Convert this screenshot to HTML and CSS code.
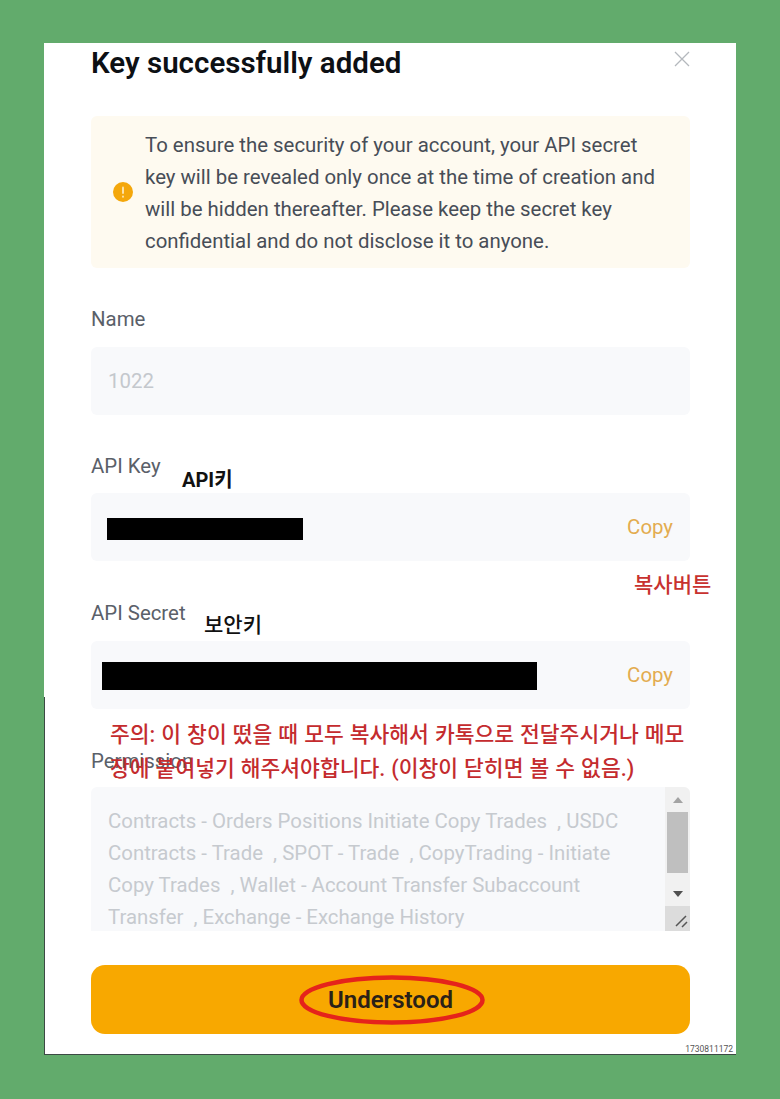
FILE: index.html
```html
<!DOCTYPE html>
<html lang="ko">
<head>
<meta charset="utf-8">
<title>Key successfully added</title>
<link rel="stylesheet" href="styles.css">
</head>
<body>
<main class="card">
  <header class="head">
    <h1 class="title">Key successfully added</h1>
    <svg class="close" viewBox="0 0 16 16" width="16" height="16"><path d="M1 1 15 15M15 1 1 15"/></svg>
  </header>
  <section class="notice">
    <svg class="warn" viewBox="0 0 20 20" width="20" height="20"><circle cx="10" cy="10" r="10"/><rect x="9" y="4.5" width="2" height="7.5" rx="1"/><rect x="9" y="13.5" width="2" height="2.2" rx="1"/></svg>
    <p class="notice-text">To ensure the security of your account, your API secret key will be revealed only once at the time of creation and will be hidden thereafter. Please keep the secret key confidential and do not disclose it to anyone.</p>
  </section>
  <section class="field name-field">
    <label class="label">Name</label>
    <div class="input"><span class="placeholder">1022</span></div>
  </section>
  <section class="field key-field">
    <label class="label">API Key</label>
    <div class="input input-copy"><span class="copy">Copy</span></div>
  </section>
  <section class="field secret-field">
    <label class="label label-secret">API Secret</label>
    <div class="input input-copy"><span class="copy">Copy</span></div>
  </section>
  <section class="field perm-field">
    <label class="label label-perm">Permission</label>
    <div class="textarea">
      <p class="perm-text">Contracts - Orders Positions Initiate Copy Trades &nbsp;, USDC Contracts - Trade &nbsp;, SPOT - Trade &nbsp;, CopyTrading - Initiate Copy Trades &nbsp;, Wallet - Account Transfer Subaccount Transfer &nbsp;, Exchange - Exchange History</p>
      <div class="scrollbar">
        <div class="arrow-btn"><i class="tri tri-up"></i></div>
        <div class="track"><div class="thumb"></div></div>
        <div class="arrow-btn"><i class="tri tri-down"></i></div>
        <div class="resizer"><svg viewBox="0 0 24 24" width="24" height="24"><path d="M11 20 21 10M17 21 22 16"/></svg></div>
      </div>
    </div>
  </section>
  <button class="submit" type="button">Understood</button>

  <div class="edge"></div>
  <div class="redact redact-key"></div>
  <div class="redact redact-secret"></div>
  <span class="note note-api">API키</span>
  <span class="note note-secret">보안키</span>
  <span class="note note-copy">복사버튼</span>
  <p class="note note-warning">주의: 이 창이 떴을 때 모두 복사해서 카톡으로 전달주시거나 메모<br>장에 붙여넣기 해주셔야합니다. (이창이 닫히면 볼 수 없음.)</p>
  <svg class="ring" viewBox="0 0 186 50" width="186" height="50"><ellipse cx="93" cy="25" rx="90.5" ry="22.5"/></svg>
  <span class="stamp">1730811172</span>
</main>
</body>
</html>
```
FILE: styles.css
```css
* { box-sizing: border-box; }
html, body { margin: 0; padding: 0; }
body {
  width: 780px;
  height: 1099px;
  overflow: hidden;
  background: #62ab6c;
  padding: 43px 44px 44px;
  font-family: "Roboto", "Noto Sans CJK KR", sans-serif;
}
.card {
  position: relative;
  width: 692px;
  height: 1012px;
  background: #fff;
  padding: 0 46px 0 47px;
  border-bottom: 1px solid #3c4a44;
  display: flex;
  flex-direction: column;
}
.head {
  display: flex;
  justify-content: space-between;
  align-items: flex-start;
  height: 73px;
}
.title {
  margin: 2px 0 0;
  font-size: 29.5px;
  line-height: 36px;
  font-weight: 600;
  color: #0d1014;
}
.close { margin: 8px 0 0; }
.close path { stroke: #b4b8bd; stroke-width: 1.3; fill: none; }
.notice {
  display: flex;
  align-items: center;
  gap: 12px;
  height: 152px;
  padding: 0 20px 0 22px;
  background: #fefaf0;
  border-radius: 6px;
}
.warn { flex: none; }
.warn circle { fill: #f4a70b; }
.warn rect { fill: #fde2a6; }
.notice-text {
  margin: 0;
  padding-top: 2px;
  font-size: 20.4px;
  line-height: 32px;
  color: #474d57;
}
.field { display: flex; flex-direction: column; }
.name-field { margin-top: 37px; }
.key-field { margin-top: 37px; }
.secret-field { margin-top: 38px; }
.perm-field { margin-top: 38px; }
.label {
  font-size: 20.4px;
  line-height: 28px;
  height: 28px;
  color: #5a6069;
  margin-bottom: 14px;
}
.key-field .label { margin-bottom: 13px; }
.label-perm { margin-bottom: 12px; }
.input {
  display: flex;
  align-items: center;
  justify-content: space-between;
  height: 68px;
  padding: 0 17px;
  background: #f8f9fb;
  border-radius: 6px;
}
.input-copy { justify-content: flex-end; padding-bottom: 1px; }
.placeholder { font-size: 20.4px; color: #c4c8cd; }
.copy { font-size: 20.4px; color: #e3ac4f; }
.textarea {
  display: flex;
  justify-content: space-between;
  height: 144px;
  background: #f8f9fb;
  border-radius: 6px 6px 0 0;
  overflow: hidden;
}
.perm-text {
  margin: 0;
  width: 560px;
  padding: 18px 0 0 17px;
  font-size: 20.4px;
  line-height: 32px;
  color: #c6cacf;
}
.scrollbar {
  width: 25px;
  background: #f1f1f1;
  display: flex;
  flex-direction: column;
}
.arrow-btn {
  height: 25px;
  display: flex;
  align-items: center;
  justify-content: center;
  flex: none;
}
.tri { display: block; width: 0; height: 0; border-left: 5px solid transparent; border-right: 5px solid transparent; }
.tri-up { border-bottom: 6px solid #a3a3a3; }
.tri-down { border-top: 6px solid #505050; }
.track { flex: 1; padding: 0 2px; }
.thumb { height: 61px; background: #bfbfbf; }
.resizer { height: 25px; background: #dcdcdc; flex: none; }
.resizer path { stroke: #555; stroke-width: 1.5; fill: none; }
.submit {
  margin-top: 34px;
  height: 69px;
  width: 100%;
  border: 0;
  border-radius: 14px;
  background: #f8a800;
  color: #2a2118;
  font-family: inherit;
  font-size: 24px;
  font-weight: 600;
}
.edge { position: absolute; left: 0; top: 654px; bottom: 0; width: 1px; background: #3c4a44; }
.redact { position: absolute; background: #000; }
.redact-key { left: 63px; top: 475px; width: 196px; height: 22px; }
.redact-secret { left: 58px; top: 619px; width: 435px; height: 28px; }
.note { position: absolute; margin: 0; font-weight: 500; white-space: nowrap; }
.note-api { left: 138px; top: 424px; font-size: 20px; line-height: 26px; font-weight: 700; color: #111; }
.note-secret { left: 160px; top: 569px; font-size: 21px; line-height: 26px; color: #111; }
.note-copy { left: 590px; top: 528px; font-size: 21px; line-height: 28px; color: #c8322f; }
.note-warning { left: 66px; top: 675px; font-size: 21.5px; line-height: 34px; word-spacing: 0.7px; color: #c42b2e; }
.ring { position: absolute; left: 255px; top: 932px; }
.ring ellipse { fill: none; stroke: #e5231b; stroke-width: 4.5; }
.stamp { position: absolute; right: 3px; bottom: 0; font-size: 8.5px; line-height: 10px; color: #555; }
```
